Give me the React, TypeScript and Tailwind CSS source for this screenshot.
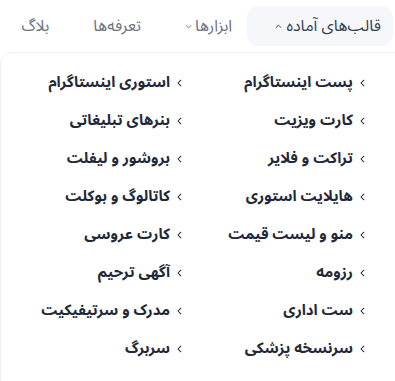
import React from 'react';

const rightCol = [
  'پست اینستاگرام',
  'کارت ویزیت',
  'تراکت و فلایر',
  'هایلایت استوری',
  'منو و لیست قیمت',
  'رزومه',
  'ست اداری',
  'سرنسخه پزشکی',
];

const leftCol = [
  'استوری اینستاگرام',
  'بنرهای تبلیغاتی',
  'بروشور و لیفلت',
  'کاتالوگ و بوکلت',
  'کارت عروسی',
  'آگهی ترحیم',
  'مدرک و سرتیفیکیت',
  'سربرگ',
];

const Chevron = ({ dir, size = 8 }: { dir: 'left' | 'up' | 'down'; size?: number }) => {
  const d = dir === 'left' ? 'M6 1.5L2.5 5L6 8.5' : dir === 'up' ? 'M1.5 6.5L5 3L8.5 6.5' : 'M1.5 3.5L5 7L8.5 3.5';
  return (
    <svg width={size} height={size} viewBox="0 0 10 10" fill="none" stroke="currentColor" strokeWidth={1.3} strokeLinecap="round" strokeLinejoin="round">
      <path d={d} />
    </svg>
  );
};

const App: React.FC = () => {
  return (
    <div dir="rtl" className="w-[395px] h-[381px] bg-white overflow-hidden" style={{ fontFamily: '"Noto Sans Arabic", "DejaVu Sans", sans-serif' }}>
      {/* Nav */}
      <div className="flex items-center h-[52px] pt-[6px] pb-[6px] pr-[2px] whitespace-nowrap">
        <div className="flex shrink-0 items-center justify-start gap-[4px] w-[146px] h-[40px] pr-[12px] bg-[#f5f7fa] rounded-xl text-[16px] text-[#374151]">
          <span>قالب‌های آماده</span>
          <Chevron dir="up" size={7} />
        </div>
        <div className="flex shrink-0 items-center gap-[3px] mr-[15px] text-[16px] text-[#6b7280]">
          <span>ابزارها</span>
          <Chevron dir="down" size={7} />
        </div>
        <div className="shrink-0 mr-[44px] text-[16px] text-[#6b7280]">تعرفه‌ها</div>
        <div className="shrink-0 mr-[44px] text-[16px] text-[#6b7280]">بلاگ</div>
      </div>

      {/* Dropdown */}
      <div className="border border-[#eef0f3] rounded-tl-xl mr-[-20px] mb-[-40px] pr-[47px] pt-[20px] pb-[40px]">
        <div className="grid grid-cols-[183px_200px]">
          {[rightCol, leftCol].map((col, ci) => (
            <div key={ci} className="flex flex-col gap-[19px]">
              {col.map((item) => (
                <div key={item} className="flex items-center gap-[6px] h-[19px] text-[15px] font-bold text-[#1f2937] whitespace-nowrap">
                  <Chevron dir="left" />
                  <span>{item}</span>
                </div>
              ))}
            </div>
          ))}
        </div>
      </div>
    </div>
  );
};

export default App;
